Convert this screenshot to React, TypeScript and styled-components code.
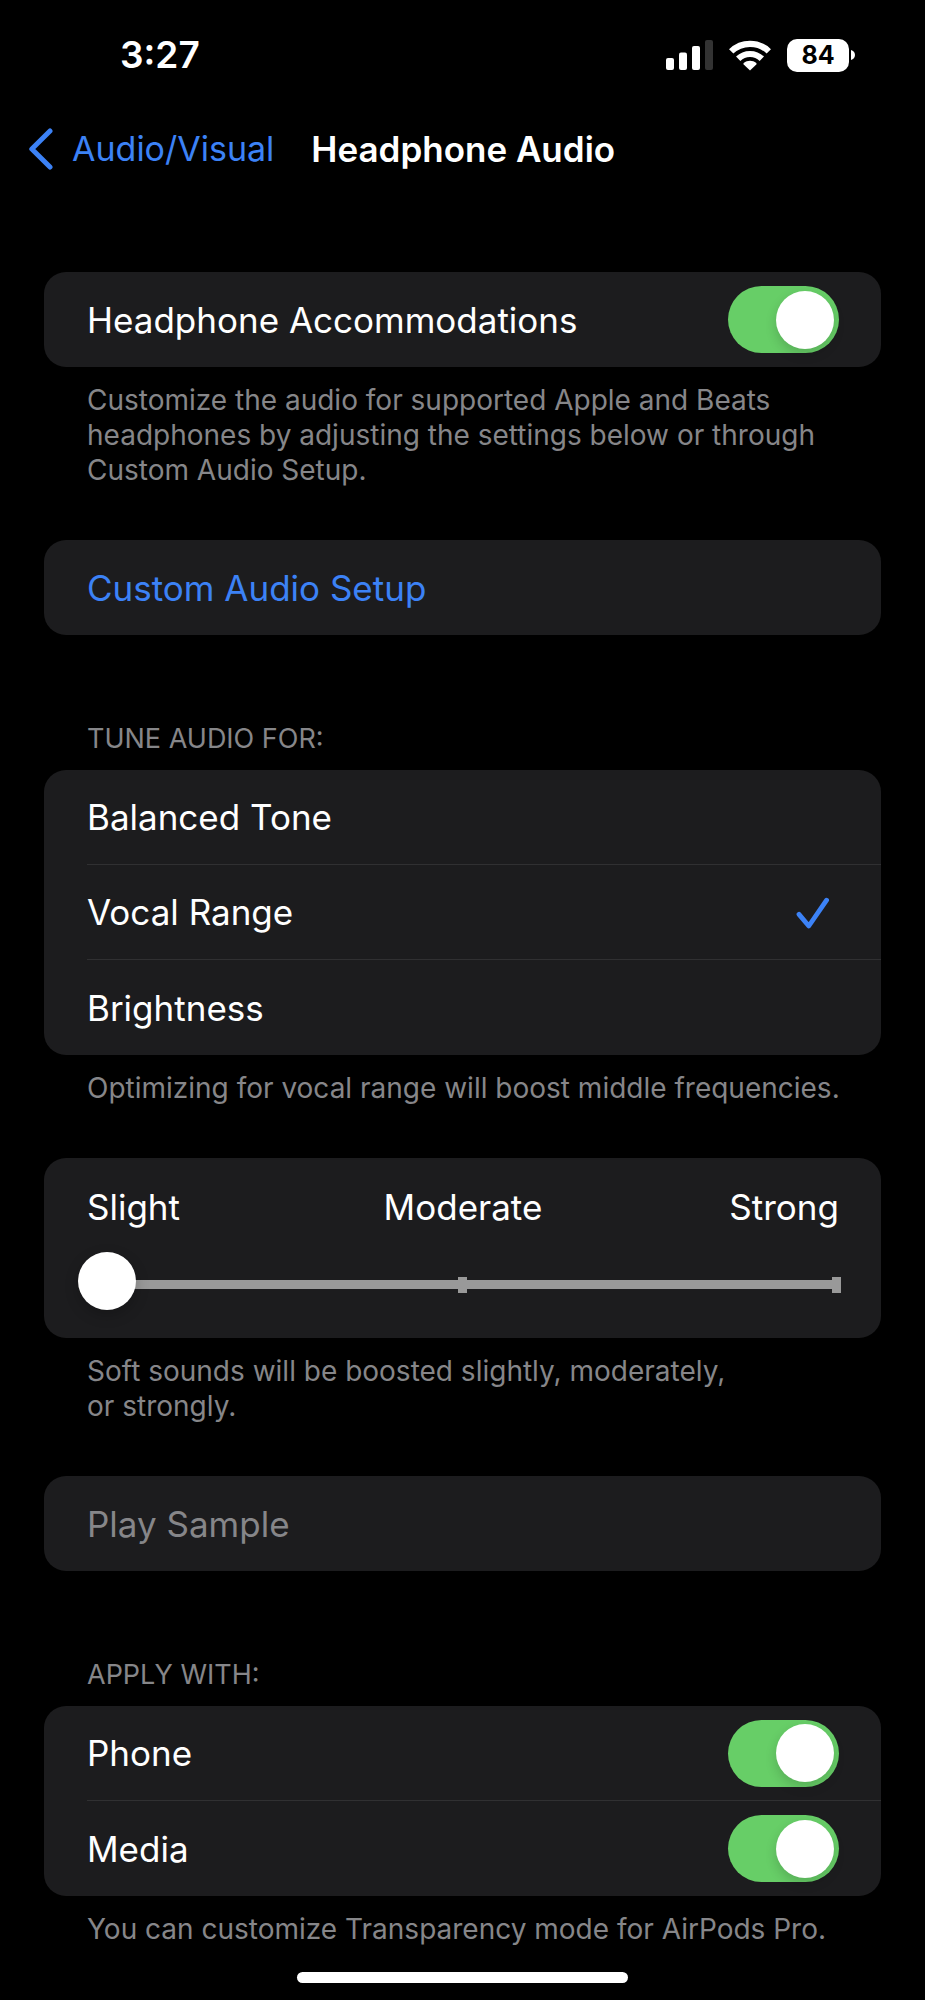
import React, { useState } from "react";
import styled, { createGlobalStyle } from "styled-components";

const color = {
  card: "#1c1c1e",
  line: "#303032",
  blue: "#3c82f6",
  green: "#67ce67",
  muted: "#868689",
  track: "#999999",
};

const GlobalStyle = createGlobalStyle`
  *, *::before, *::after { box-sizing: border-box; }
  html { background: #000; }
  body {
    margin: 0;
    background: #000;
    color: #fff;
    font-family: Inter, "Liberation Sans", sans-serif;
    font-size: 35px;
    line-height: 44px;
  }
`;

const Screen = styled.div`
  display: flex;
  flex-direction: column;
`;

const StatusBar = styled.header`
  display: flex;
  align-items: center;
  justify-content: space-between;
  height: 110px;
  padding: 0 70px 0 120px;
`;

const Time = styled.time`
  font-size: 37px;
  font-weight: 600;
`;

const StatusIcons = styled.div`
  display: flex;
  align-items: center;
  gap: 16px;
`;

const Battery = styled.div`
  display: flex;
  align-items: center;
  gap: 2px;
`;

const BatteryLevel = styled.span`
  width: 62px;
  height: 33px;
  border-radius: 10px;
  background: #fff;
  color: #000;
  font-size: 25px;
  font-weight: 700;
  line-height: 33px;
  text-align: center;
`;

const NavBar = styled.nav`
  display: flex;
  align-items: center;
  gap: 37px;
  height: 78px;
  padding: 0 28px;
`;

const BackLink = styled.a`
  display: flex;
  align-items: center;
  gap: 19px;
  color: ${color.blue};
  font-size: 34px;
  text-decoration: none;
`;

const Title = styled.h1`
  margin: 0;
  font-size: 35px;
  font-weight: 600;
`;

const Settings = styled.main`
  display: flex;
  flex-direction: column;
  gap: 52px;
  padding: 84px 44px 0;
`;

const Group = styled.section<{ $spaced?: boolean }>`
  padding-top: ${(p) => (p.$spaced ? "34px" : "0")};
`;

const GroupTitle = styled.h2`
  margin: 0 43px 14px;
  color: ${color.muted};
  font-size: 27px;
  font-weight: 400;
  line-height: 35px;
`;

const GroupNote = styled.p`
  margin: 16px 30px 0 43px;
  color: ${color.muted};
  font-size: 28px;
  line-height: 35px;
`;

const Card = styled.div`
  padding-left: 43px;
  border-radius: 22px;
  background: ${color.card};
`;

const Row = styled.label`
  display: flex;
  align-items: center;
  justify-content: space-between;
  height: 95px;
  padding-right: 42px;

  &:not(:last-child) {
    border-bottom: 1px solid ${color.line};
  }
`;

const ActionButton = styled.button`
  display: block;
  width: 100%;
  height: 95px;
  padding: 0 43px;
  border: 0;
  border-radius: 22px;
  background: ${color.card};
  color: ${color.blue};
  font: inherit;
  text-align: left;

  &:disabled {
    color: ${color.muted};
  }
`;

const Switch = styled.input`
  appearance: none;
  display: flex;
  align-items: center;
  width: 111px;
  height: 67px;
  margin: 0;
  padding: 0 5px;
  border-radius: 34px;
  background: #39393d;

  &::before {
    content: "";
    width: 58px;
    height: 58px;
    border-radius: 50%;
    background: #fff;
    box-shadow: 0 5px 12px rgba(0, 0, 0, 0.16);
  }

  &:checked {
    justify-content: flex-end;
    background: ${color.green};
  }
`;

const HiddenRadio = styled.input`
  appearance: none;
  width: 0;
  height: 0;
  margin: 0;
`;

const RowText = styled.span`
  flex: 1;
`;

const CheckIcon = styled.svg`
  margin-right: 9px;
`;

const SliderPanel = styled.div`
  padding: 27px 42px 28px 0;
`;

const SliderLabels = styled.div`
  display: grid;
  grid-template-columns: 1fr auto 1fr;
  margin-bottom: 23px;

  span:last-child {
    text-align: right;
  }
`;

const Slider = styled.input`
  appearance: none;
  display: block;
  width: calc(100% + 17px);
  height: 58px;
  margin: 0 -8px 0 -9px;
  background-color: transparent;
  background-image: linear-gradient(${color.track}, ${color.track}),
    linear-gradient(${color.track}, ${color.track}),
    linear-gradient(${color.track}, ${color.track});
  background-repeat: no-repeat;
  background-size: calc(100% - 12px) 9px, 9px 16px, 9px 16px;
  background-position: 6px 28px, center 25px, right 6px top 25px;

  &::-webkit-slider-thumb {
    appearance: none;
    width: 58px;
    height: 58px;
    border-radius: 50%;
    background: #fff;
    box-shadow: 0 5px 14px rgba(0, 0, 0, 0.22);
  }
`;

const HomeIndicator = styled.div`
  width: 331px;
  height: 11px;
  margin: 25px auto 17px;
  border-radius: 6px;
  background: #fff;
`;

const SignalIcon = () => (
  <svg width="47" height="30" viewBox="0 0 47 30" fill="#fff" aria-hidden="true">
    <rect x="0" y="18" width="8" height="12" rx="2" />
    <rect x="13" y="12.5" width="8" height="17.5" rx="2" />
    <rect x="26" y="6" width="8" height="24" rx="2" />
    <rect x="39" y="0" width="8" height="30" rx="2" fill="#333" />
  </svg>
);

const WifiIcon = () => (
  <svg width="42" height="31" viewBox="0 0 42 31" aria-hidden="true">
    <g fill="none" stroke="#fff" strokeWidth="6.2">
      <path d="M2.2 11.4C12.6 1.3 29.4 1.3 39.8 11.4" />
      <path d="M9.2 18.7C15.7 12.4 26.3 12.4 32.8 18.7" />
    </g>
    <path
      d="M21 30.6L14.7 24.4C14.3 24 14.3 23.4 14.7 23C18.4 20.1 23.6 20.1 27.3 23C27.7 23.4 27.7 24 27.3 24.4Z"
      fill="#fff"
    />
  </svg>
);

const BatteryTip = () => (
  <svg width="4" height="10" viewBox="0 0 4 10" aria-hidden="true">
    <path d="M0 0C2.4 0.7 4 2.6 4 5S2.4 9.3 0 10Z" fill="#fff" />
  </svg>
);

const BackChevron = () => (
  <svg width="25" height="42" viewBox="0 0 25 42" aria-hidden="true">
    <path
      d="M22 3L3.8 21L22 39"
      fill="none"
      stroke={color.blue}
      strokeWidth="5"
      strokeLinecap="round"
      strokeLinejoin="round"
    />
  </svg>
);

const Check = () => (
  <CheckIcon width="34" height="34" viewBox="0 0 34 34" aria-hidden="true">
    <path
      d="M3 19.4L12.8 31L30.6 5.2"
      fill="none"
      stroke={color.blue}
      strokeWidth="4.8"
      strokeLinecap="round"
      strokeLinejoin="round"
    />
  </CheckIcon>
);

function SwitchRow({ label }: { label: string }) {
  const [on, setOn] = useState(true);
  return (
    <Row>
      {label}
      <Switch
        type="checkbox"
        role="switch"
        checked={on}
        onChange={(e) => setOn(e.target.checked)}
      />
    </Row>
  );
}

const tones = ["Balanced Tone", "Vocal Range", "Brightness"];

export default function App() {
  const [tone, setTone] = useState("Vocal Range");
  const [boost, setBoost] = useState(0);

  return (
    <Screen>
      <GlobalStyle />
      <StatusBar>
        <Time>3:27</Time>
        <StatusIcons>
          <SignalIcon />
          <WifiIcon />
          <Battery>
            <BatteryLevel>84</BatteryLevel>
            <BatteryTip />
          </Battery>
        </StatusIcons>
      </StatusBar>

      <NavBar>
        <BackLink href="#audio-visual">
          <BackChevron />
          Audio/Visual
        </BackLink>
        <Title>Headphone Audio</Title>
      </NavBar>

      <Settings>
        <Group>
          <Card>
            <SwitchRow label="Headphone Accommodations" />
          </Card>
          <GroupNote>
            Customize the audio for supported Apple and Beats headphones by
            adjusting the settings below or through Custom Audio Setup.
          </GroupNote>
        </Group>

        <Group>
          <ActionButton type="button">Custom Audio Setup</ActionButton>
        </Group>

        <Group $spaced>
          <GroupTitle>TUNE AUDIO FOR:</GroupTitle>
          <Card role="radiogroup" aria-label="Tune audio for">
            {tones.map((name) => (
              <Row key={name}>
                <HiddenRadio
                  type="radio"
                  name="tone"
                  checked={tone === name}
                  onChange={() => setTone(name)}
                />
                <RowText>{name}</RowText>
                {tone === name && <Check />}
              </Row>
            ))}
          </Card>
          <GroupNote>
            Optimizing for vocal range will boost middle frequencies.
          </GroupNote>
        </Group>

        <Group>
          <Card>
            <SliderPanel>
              <SliderLabels>
                <span>Slight</span>
                <span>Moderate</span>
                <span>Strong</span>
              </SliderLabels>
              <Slider
                type="range"
                aria-label="Boost for soft sounds"
                min={0}
                max={2}
                step={1}
                value={boost}
                onChange={(e) => setBoost(Number(e.target.value))}
              />
            </SliderPanel>
          </Card>
          <GroupNote>
            Soft sounds will be boosted slightly, moderately,
            or&nbsp;strongly.
          </GroupNote>
        </Group>

        <Group>
          <ActionButton type="button" disabled>
            Play Sample
          </ActionButton>
        </Group>

        <Group $spaced>
          <GroupTitle>APPLY WITH:</GroupTitle>
          <Card>
            <SwitchRow label="Phone" />
            <SwitchRow label="Media" />
          </Card>
          <GroupNote>
            You can customize Transparency mode for AirPods Pro.
          </GroupNote>
        </Group>
      </Settings>

      <HomeIndicator />
    </Screen>
  );
}
